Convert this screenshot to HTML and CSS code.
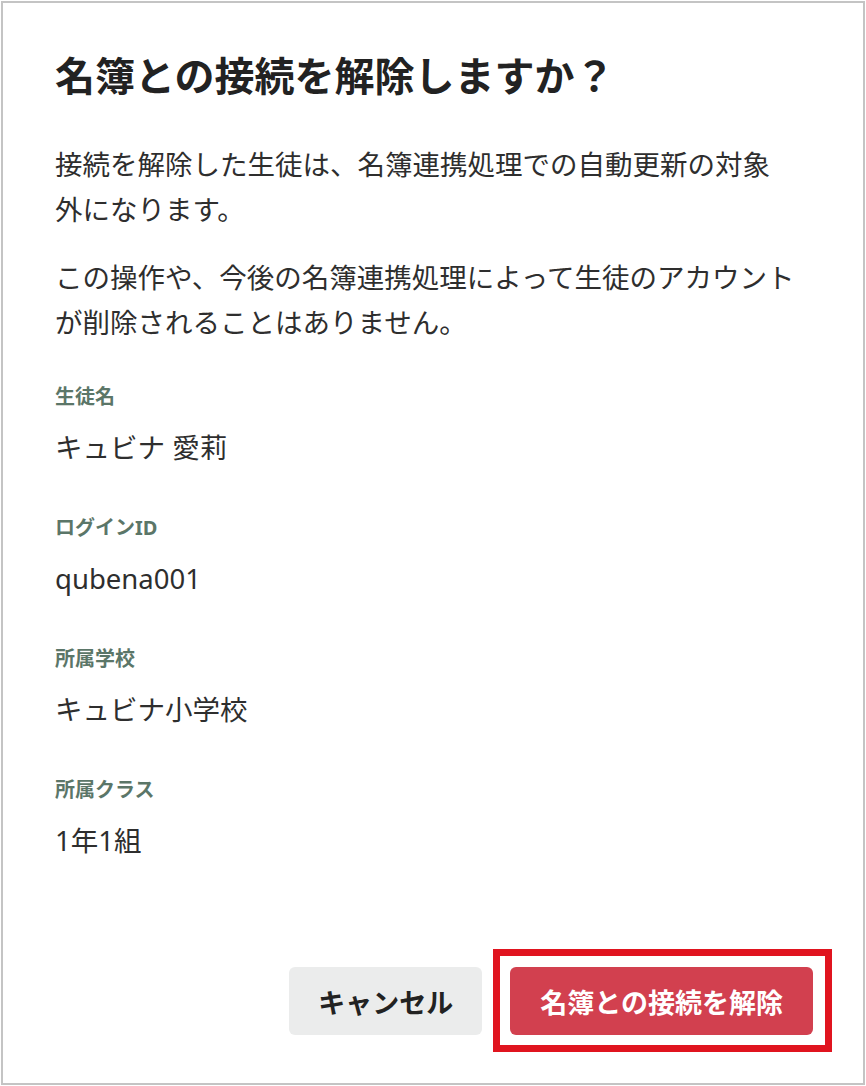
FILE: index.html
```html
<!DOCTYPE html>
<html lang="ja">

<head>
    <meta charset="UTF-8">
    <meta name="viewport" content="width=device-width, initial-scale=1.0">
    <title>名簿との接続を解除</title>
    <link rel="stylesheet" href="styles.css">
</head>

<body>
    <div class="dialog">
        <h1 class="dialog-title">名簿との接続を解除しますか？</h1>

        <p class="dialog-text">接続を解除した生徒は、名簿連携処理での自動更新の対象<br>外になります。</p>
        <p class="dialog-text">この操作や、今後の名簿連携処理によって生徒のアカウントが削除されることはありません。</p>

        <dl class="fields">
            <div class="field">
                <dt>生徒名</dt>
                <dd>キュビナ 愛莉</dd>
            </div>
            <div class="field">
                <dt>ログインID</dt>
                <dd>qubena001</dd>
            </div>
            <div class="field">
                <dt>所属学校</dt>
                <dd>キュビナ小学校</dd>
            </div>
            <div class="field">
                <dt>所属クラス</dt>
                <dd>1年1組</dd>
            </div>
        </dl>

        <div class="actions">
            <a href="javascript:;" class="btn btn-cancel">キャンセル</a>
            <a href="javascript:;" class="btn btn-danger">名簿との接続を解除</a>
        </div>
    </div>
</body>

</html>
```

FILE: styles.css
```css
html,
body {
    margin: 0;
    padding: 0;
    background: #fff;
}

body {
    font-family: "Noto Sans", "Noto Sans CJK JP", sans-serif;
    color: #2e2e2e;
}

.dialog {
    box-sizing: border-box;
    width: 864px;
    height: 1084px;
    margin: 1px 0 0 1px;
    padding: 45px 50px 48px 52px;
    border: 2px solid #c4c4c4;
    display: flex;
    flex-direction: column;
}

.dialog-title {
    margin: 0 0 38px;
    font-size: 40px;
    line-height: 56px;
    font-weight: 700;
    color: #222;
}

.dialog-text {
    margin: 0 0 23px;
    font-size: 27.5px;
    line-height: 45px;
}

.fields {
    margin: 15px 0 0;
}

.field {
    margin-top: 44px;
}

.field:first-child {
    margin-top: 0;
}

.field dt {
    font-size: 20px;
    line-height: 28px;
    font-weight: 700;
    color: #5b7668;
}

.field dd {
    margin: 15px 0 0;
    font-size: 27.5px;
    line-height: 44px;
    color: #2e2e2e;
}

/* ボタンはダイアログ下端に寄せる */
.actions {
    margin-top: auto;
    display: flex;
    justify-content: flex-end;
    gap: 28px;
}

.btn {
    display: flex;
    align-items: center;
    justify-content: center;
    height: 68px;
    padding: 0 29px;
    border-radius: 6px;
    font-size: 27px;
    font-weight: 700;
    text-decoration: none;
}

.btn-cancel {
    background: #ebecec;
    color: #222;
}

.btn-danger {
    position: relative;
    padding: 0 30px;
    background: #d2404f;
    color: #fff;
}

/* 注釈用の赤枠 */
.btn-danger::after {
    content: "";
    position: absolute;
    top: -18px;
    left: -17px;
    right: -19px;
    bottom: -17px;
    border: 7px solid #e0141f;
    pointer-events: none;
}
```
